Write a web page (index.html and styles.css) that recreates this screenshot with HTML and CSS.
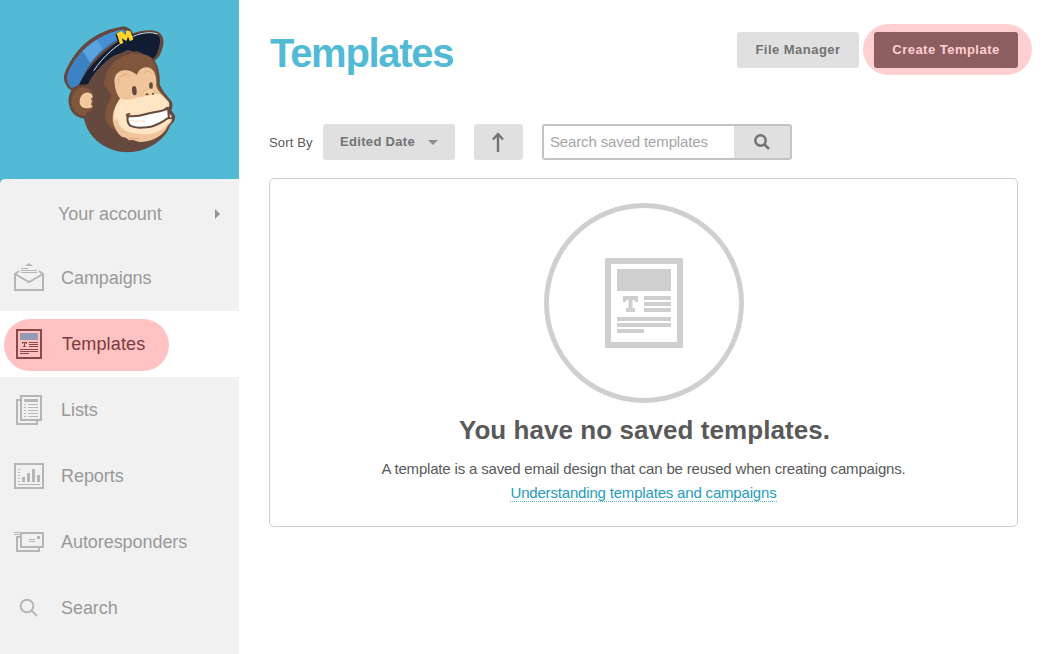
FILE: index.html
```html
<!DOCTYPE html>
<html lang="en">
<head>
<meta charset="utf-8">
<title>Templates</title>
<link rel="stylesheet" href="styles.css">
</head>
<body>
<div class="app">
  <aside class="sidebar">
    <div class="brand">
      <svg class="mascot" viewBox="0 0 420 450" aria-label="Mascot">
        <path fill="#65493f" d="M42 182C48 160 66 126 93 97C124 65 164 43 214 35C229 33 242 39 249 55C276 45 307 42 325 51C342 61 344 83 336 104C330 123 321 133 314 137C326 155 331 184 329 207C335 225 351 243 365 259C369 268 368 278 364 286L375 302C377 315 369 325 361 330C353 356 331 379 303 394C270 413 227 417 190 405C141 389 111 354 101 310C78 309 60 291 56 264C54 247 58 235 64 227C48 214 40 199 42 182Z"/>
        <path fill="#80573d" d="M160 214C163 166 190 125 233 109L246 117L260 109L273 118L292 122C316 133 323 166 322 207C330 230 346 242 361 263L320 286L205 352C169 339 160 310 168 281C173 261 185 255 184 237Z"/>
        <path fill="#3c83c5" d="M51 184C55 164 75 129 101 104C130 75 170 52 218 44L243 56L199 78C148 109 112 148 88 208L65 220C55 211 50 198 51 184Z"/>
        <path fill="#4490d3" d="M98 108C128 78 170 52 217 44L235 53C186 75 146 110 121 143Z"/>
        <path fill="#5ba3e0" d="M98 108C112 94 127 82 141 74L158 102C144 115 131 129 121 143Z"/>
        <path fill="#101d32" d="M87 210C106 167 146 125 190 90C235 58 292 41 320 57C334 67 331 84 326 99C322 116 317 125 309 131C300 124 291 119 280 117L268 110L258 114L240 106L226 112L206 119C174 132 150 153 130 180C120 192 117 205 112 208Z"/>
        <path fill="#65493f" d="M128 216C134 168 170 126 212 115L232 105L246 111L262 108L273 117C220 120 175 160 162 214Z"/>
        <path fill="#80573d" d="M160 216C163 168 190 132 230 119L250 114L275 120C230 130 205 160 200 205L180 250Z"/>
        <path fill="none" stroke="#dfe6ea" stroke-width="3" stroke-linecap="round" d="M132 166C158 126 201 86 250 64C277 52 305 50 321 57"/>
        <path fill="#101d32" d="M196 58L212 47L224 58L230 46L243 50L249 75L236 83L230 80L221 92L206 87Z"/>
        <path fill="#ffd52c" d="M199 56L213 47L226 59L229 46L241 49L250 73L240 79L234 65L229 78L215 70L220 84L210 88L203 64Z"/>
        <path fill="#80573d" d="M65 267C61 242 73 223 93 218C111 214 125 223 132 241L126 302C93 309 70 293 65 267Z"/>
        <path fill="#f3caa0" d="M89 263C88 243 101 231 116 233C125 235 129 240 131 248C123 246 121 251 126 257L123 268L128 276C107 285 91 278 89 263Z"/>
        <path fill="#65493f" d="M127 212C122 229 132 251 132 271C127 292 110 290 104 299C105 344 137 386 184 400C228 416 278 404 310 386L210 350C180 338 162 320 164 290L184 240L160 204Z"/>
        <path fill="#80573d" d="M186 236C186 255 172 264 167 284C161 316 176 334 208 354L240 330L215 245Z"/>
        <path fill="#f0c59b" d="M194 205C190 182 204 167 223 166C242 165 254 174 261 180C266 160 285 152 300 159C316 167 320 189 319 212C322 230 344 244 356 262C362 276 355 288 348 291L364 301C371 319 360 325 353 333C342 364 304 381 268 381L248 375L238 376L227 368L215 365C200 352 187 330 188 306C190 282 201 265 210 251C201 238 195 224 194 205Z"/>
        <path fill="#ffe5c3" d="M211 250C234 262 254 246 273 246C310 239 325 230 341 246L356 262C360 281 348 291 340 295L362 303C368 318 358 323 348 332C329 355 296 361 264 356C227 356 205 337 201 310L193 318C190 289 195 273 211 250Z"/>
        <path fill="none" stroke="#e5ae7f" stroke-width="3" stroke-linecap="round" d="M206 206C204 188 213 179 225 182M282 173C291 165 303 169 308 178M216 178C227 173 236 179 240 184"/>
        <path fill="#ffffff" stroke="#65493f" stroke-width="6" stroke-linejoin="round" d="M234 303C257 306 272 302 289 297C315 290 336 290 353 281C357 287 354 297 357 308C337 318 326 333 290 337C267 339 244 340 237 328C232 320 231 311 234 303Z"/>
        <path fill="none" stroke="#f7dfbe" stroke-width="3" d="M240 316C258 323 270 315 285 319"/>
        <path fill="none" stroke="#65493f" stroke-width="5" stroke-linecap="round" d="M230 302Q230 296 239 297M346 281Q353 276 360 278M357 310Q367 311 370 306"/>
        <ellipse cx="253" cy="227" rx="7" ry="14" fill="#65493f" transform="rotate(-5 253 227)"/>
        <ellipse cx="303" cy="212" rx="5.500" ry="10" fill="#65493f"/>
        <path fill="#f7d2a8" stroke="#dfa777" stroke-width="2" d="M280 238Q283 223 297 222Q310 219 316 234"/>
        <ellipse cx="291" cy="238" rx="4.500" ry="3" fill="#65493f"/><ellipse cx="309" cy="236" rx="3.500" ry="3" fill="#65493f"/>
        <path fill="none" stroke="#e3a775" stroke-width="3" d="M237 369Q250 376 267 369"/>
      </svg>
    </div>
    <nav class="nav">
      <a class="account"><span>Your account</span><svg class="caret" viewBox="0 0 5 10"><path d="M0 0L5 5L0 10Z"/></svg></a>
      <a class="item">
        <svg class="icon" viewBox="0 0 30 30"><path class="line" d="M5 8L1 11V27H29V11L25 8M1 11L15 19L29 11"/><path class="fill" d="M11 3L15 0L19 3Z"/><path class="thin" d="M7 5.500H14M7 7.500H23M7 9.500H23"/></svg>
        <span>Campaigns</span></a>
      <a class="item current">
        <span class="pill"></span>
        <svg class="icon" viewBox="0 0 30 30"><path class="line" d="M3 1H27V29H3Z"/><path fill="#949cb5" d="M6 4H24V11H6Z"/><path class="fill" d="M8 13H13V15H12V14H11V17H12V18H9V17H10V14H9V15H8Z"/><path class="thin" d="M15 13.500H24M15 15.500H24M15 17.500H24M6 20.500H24M6 22.500H24M6 24.500H15"/></svg>
        <span>Templates</span></a>
      <a class="item">
        <svg class="icon" viewBox="0 0 30 30"><path class="line" d="M7 1H27V25H7ZM7 5H3V29H23V25"/><path class="fill" d="M10 4H24V7H10Z"/><path class="thin" d="M10 9.500H12M14 9.500H24M10 12.500H12M14 12.500H24M10 15.500H12M14 15.500H24M10 18.500H12M14 18.500H24M10 21.500H12M14 21.500H24"/></svg>
        <span>Lists</span></a>
      <a class="item">
        <svg class="icon" viewBox="0 0 30 30"><path class="line" d="M1 3H29V27H1Z"/><path class="fill" d="M8 16H11V21H8ZM13 12H16V21H13ZM18 8H21V21H18ZM23 14H26V21H23Z"/><path class="thin" d="M4 23.500H26M4 8.500H6M4 11.500H6M4 14.500H6M4 17.500H6M4 20.500H6"/></svg>
        <span>Reports</span></a>
      <a class="item">
        <svg class="icon" viewBox="0 0 30 30"><path class="line" d="M7 6H29V20H7ZM7 10H3V24H25V20"/><path class="fill" d="M23 9H26V12H23Z"/><path class="thin" d="M0 5.500H8M0 7.500H6M15 12.500H21M15 14.500H21"/></svg>
        <span>Autoresponders</span></a>
      <a class="item">
        <svg class="icon" viewBox="0 0 30 30"><circle class="line" cx="13" cy="13" r="6.300"/><path class="line" d="M17.500 17.500L23 23"/></svg>
        <span>Search</span></a>
    </nav>
  </aside>
  <main class="main">
    <header class="head">
      <h1 class="title">Templates</h1>
      <div class="actions">
        <button class="btn">File Manager</button>
        <div class="spotlight"><button class="btn primary">Create Template</button></div>
      </div>
    </header>
    <div class="toolbar">
      <span class="sort-label">Sort By</span>
      <button class="btn select"><span>Edited Date</span><svg class="down" viewBox="0 0 10 5"><path d="M0 0H10L5 5Z"/></svg></button>
      <button class="btn order" aria-label="Ascending"><svg class="arrow" viewBox="0 0 12 20"><path d="M6 20V2M1 7.500L6 2L11 7.500"/></svg></button>
      <div class="search">
        <span class="field">Search saved templates</span>
        <span class="go"><svg class="glass" viewBox="0 0 16 16"><circle cx="6.500" cy="6.500" r="5.200"/><path d="M10.500 10.500L15 15"/></svg></span>
      </div>
    </div>
    <section class="panel">
      <svg class="empty" viewBox="0 0 200 200"><circle cx="100" cy="100" r="97.500" fill="none" stroke="#cfcfcf" stroke-width="5"/><path fill="none" stroke="#cfcfcf" stroke-width="6" d="M64 58H136V142H64Z"/><path fill="#cfcfcf" d="M73 66H127V88H73ZM79 93H94V99H91V97H88.500V105H91V109H82V105H84.500V97H82V99H79ZM100 93H127V97H100ZM100 99H127V103H100ZM100 105H127V109H100ZM73 114H127V118H73ZM73 120H127V124H73ZM73 126H100V130H73Z"/></svg>
      <h2 class="heading">You have no saved templates.</h2>
      <p class="note">A template is a saved email design that can be reused when creating campaigns.</p>
      <a class="link">Understanding templates and campaigns</a>
    </section>
  </main>
</div>
</body>
</html>
```
FILE: styles.css
```css
* { box-sizing: border-box; }
body { margin: 0; font-family: "Liberation Sans", Arial, sans-serif; background: #fff; color: #595959; }
svg { display: block; flex: none; }
.app { display: flex; height: 654px; overflow: hidden; }
.sidebar { width: 239px; flex: none; background: #52bad5; display: flex; flex-direction: column; }
.brand { height: 179px; flex: none; padding: 15px 0 0 50px; }
.mascot { width: 140px; height: 150px; }
.nav { flex: 1; background: #f1f1f1; border-radius: 5px 0 0 0; font-size: 18px; line-height: 22px; letter-spacing: -.06px; color: #999; }
.account { display: flex; align-items: center; justify-content: space-between; height: 66px; padding: 4px 19px 0 58px; }
.caret { width: 5px; height: 10px; fill: #959595; }
.item { display: flex; align-items: center; gap: 17px; height: 66px; padding-left: 14px; position: relative; }
.icon { width: 30px; height: 30px; color: #b6b6b6; position: relative; }
.item span { position: relative; }
.line { fill: none; stroke: currentColor; stroke-width: 2; }
.thin { fill: none; stroke: currentColor; stroke-width: 1; }
.fill { fill: currentColor; }
.current { background: #fff; color: #793c3c; gap: 18px; letter-spacing: .15px; }
.current .icon { color: #8b4848; }
.item .pill { position: absolute; left: 4px; top: 8px; width: 165px; height: 52px; border-radius: 26px; background: #ffc2c2; }
.main { flex: 1; padding: 24px 29px 0 30px; }
.head { display: flex; justify-content: space-between; height: 100px; }
.title { margin: 6px 0 0 1px; font-size: 40px; line-height: 46px; letter-spacing: -1.3px; color: #52bad5; }
.actions { display: flex; align-items: flex-start; gap: 4px; margin-right: -14px; }
.actions > .btn { margin-top: 8px; width: 122px; }
.btn { height: 36px; padding: 0; border: 0; border-radius: 3px; background: #e0e0e0; color: #737373; font: bold 13px/36px "Liberation Sans", Arial, sans-serif; letter-spacing: .48px; }
.spotlight { width: 169px; height: 51px; padding: 8px 0 0 11px; border-radius: 26px; background: #ffcfd1; }
.primary { width: 144px; background: #8c5e60; color: #ffcfd1; }
.toolbar { display: flex; align-items: center; height: 36px; }
.sort-label { width: 54px; font-size: 13px; letter-spacing: .15px; white-space: nowrap; }
.select { width: 132px; display: flex; align-items: center; padding: 0 17px; justify-content: space-between; letter-spacing: .32px; }
.down { width: 10px; height: 5px; fill: #8c8c8c; }
.order { width: 49px; margin-left: 19px; display: flex; align-items: center; justify-content: center; padding: 0 1px 1px 0; }
.arrow { width: 12px; height: 20px; fill: none; stroke: #737373; stroke-width: 2.4; }
.search { display: flex; width: 250px; height: 36px; margin-left: 19px; border: 2px solid #c4c4c4; border-radius: 3px; }
.field { flex: 1; padding-left: 6px; font-size: 15px; line-height: 32px; letter-spacing: -.14px; color: #a5a5a5; }
.go { width: 56px; background: #e0e0e0; display: flex; align-items: center; justify-content: center; }
.glass { width: 16px; height: 16px; fill: none; stroke: #737373; stroke-width: 2.5; }
.panel { display: flex; flex-direction: column; align-items: center; height: 349px; margin-top: 18px; padding-top: 24px; border: 1px solid #cfcfcf; border-radius: 5px; }
.empty { width: 200px; height: 200px; }
.heading { margin: 12px 0 0 2px; font-size: 26px; line-height: 30px; letter-spacing: .06px; }
.note { margin: 12px 0 0; font-size: 15px; line-height: 24px; letter-spacing: -.175px; }
.link { margin-top: 3px; font-size: 15px; line-height: 17px; letter-spacing: -.18px; color: #259cb9; border-bottom: 1px dotted #52bad5; }
```
